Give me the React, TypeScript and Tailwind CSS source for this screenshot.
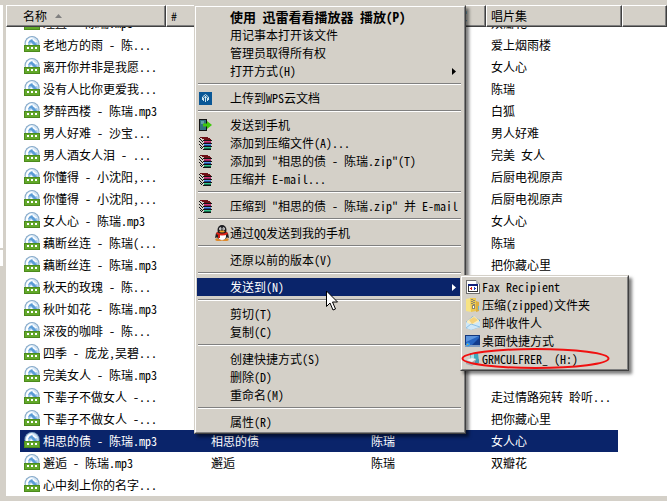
import type { ReactNode } from "react";

type Song = {
  name: string;
  title?: string;
  artist?: string;
  album?: string;
  selected?: boolean;
  cut?: boolean;
};

const songs: Song[] = [
  { name: "理直 - 陈瑞.mp3", album: "双瓣花", cut: true },
  { name: "老地方的雨 - 陈...", album: "爱上烟雨楼" },
  { name: "离开你并非是我愿...", album: "女人心" },
  { name: "没有人比你更爱我...", album: "陈瑞" },
  { name: "梦醉西楼 - 陈瑞.mp3", album: "白狐" },
  { name: "男人好难 - 沙宝...", album: "男人好难" },
  { name: "男人酒女人泪 - ...", album: "完美 女人" },
  { name: "你懂得 - 小沈阳,...", album: "后厨电视原声" },
  { name: "你懂得 - 小沈阳,...", album: "后厨电视原声" },
  { name: "女人心 - 陈瑞.mp3", album: "女人心" },
  { name: "藕断丝连 - 陈瑞(...", album: "陈瑞" },
  { name: "藕断丝连 - 陈瑞.mp3", album: "把你藏心里" },
  { name: "秋天的玫瑰 - 陈..." },
  { name: "秋叶如花 - 陈瑞.mp3" },
  { name: "深夜的咖啡 - 陈..." },
  { name: "四季 - 庞龙,吴碧..." },
  { name: "完美女人 - 陈瑞.mp3" },
  { name: "下辈子不做女人 -...", album: "走过情路宛转 聆听..." },
  { name: "下辈子不做女人 -...", album: "把你藏心里" },
  {
    name: "相思的债 - 陈瑞.mp3",
    title: "相思的债",
    artist: "陈瑞",
    album: "女人心",
    selected: true,
  },
  { name: "邂逅 - 陈瑞.mp3", title: "邂逅", artist: "陈瑞", album: "双瓣花" },
  { name: "心中刻上你的名字..." },
];

const MediaIcon = () => (
  <svg className="mb-0.5 h-4 w-4 shrink-0" viewBox="0 0 16 16">
    <circle cx="8" cy="7.500" r="7.500" fill="#86a9c8" />
    <circle cx="8" cy="7.500" r="6.500" fill="#cfe3f3" />
    <path d="M2 8q0-5 5-6.500l3 .5q-5 1-6 7H2z" fill="#fff" />
    <path d="M4 9q0-5 4-6l3 1q3 2 3 5z" fill="#9cc6ea" />
    <path d="M4 7q1-3 4-3.500l5 5.500h-3L7 6z" fill="#5b9bd5" />
    <path d="M6 9l1-2 2 2z" fill="#fff" />
    <path d="M9 2.500l4 3-1 1-3.500-2.500z" fill="#fff" />
    <rect y="9" width="16" height="7" fill="#4b8a1c" />
    <rect x="1" y="10" width="14" height="5" fill="#62a82a" />
    <path d="M3 11h2v2H3zM7 11h2v2H7zM11 11h2v2h-2z" fill="#fff" />
  </svg>
);

const CloudIcon = () => (
  <svg className="h-[13px] w-[13px]" viewBox="0 0 13 13">
    <rect width="13" height="13" fill="#0a5796" />
    <path
      d="M3.500 8V5L6.500 2.500l3 2.500v3M6.500 4v6M4.500 9V6l2-1.500 2 1.500v3"
      fill="none"
      stroke="#cfe6ee"
    />
  </svg>
);

const PhoneIcon = () => (
  <svg className="h-[13px] w-[13px]" viewBox="0 0 13 13">
    <rect x="0.5" y="0.5" width="7" height="11" fill="#2f7380" stroke="#111" />
    <path d="M2 2h3v3H2z" fill="#5fa0a8" />
    <path d="M4 4.500h4V2l5 4-5 4V7.500H4z" fill="#3fc80c" />
  </svg>
);

const RarIcon = () => (
  <svg
    className="h-[13px] w-[13px]"
    viewBox="0 0 13 13"
    shapeRendering="crispEdges"
  >
    <path d="M0 0h9v1h2v1h2v11H5v-1H4v-1H3v-1H2V9H1V8H0z" fill="#d4d0c8" />
    <path d="M1 0h8v1h2v1h1v1H5V2H3V1H1z" fill="#6e0f16" />
    <path d="M4 3h9v1H4zM4 6h9v1H4zM4 9h9v1H4zM4 12h8v1H4z" fill="#141414" />
    <path d="M5 4h7v1H5z" fill="#d63a72" />
    <path d="M5 5h7v1H5z" fill="#8c1c60" />
    <path d="M5 7h7v1H5z" fill="#4f9ae8" />
    <path d="M5 8h7v1H5z" fill="#20408c" />
    <path d="M5 10h7v1H5z" fill="#38c48c" />
    <path d="M5 11h7v1H5z" fill="#14684a" />
    <path
      d="M0 1h1v1H0zM1 2h1v1H1zM2 3h1v1H2zM3 4h1v1H3zM0 4h1v1H0zM1 5h1v1H1zM2 6h1v1H2zM3 7h1v1H3zM0 7h1v1H0zM1 8h1v1H1zM2 9h1v1H2zM3 10h1v1H3zM1 10h1v1H1zM2 11h1v1H2z"
      fill="#141414"
    />
  </svg>
);

const PenguinIcon = () => (
  <svg className="h-4 w-4" viewBox="0 0 16 16">
    <ellipse cx="4.800" cy="14.500" rx="3.500" ry="1.500" fill="#e08a2c" />
    <ellipse cx="11.200" cy="14.500" rx="3.500" ry="1.500" fill="#e08a2c" />
    <path d="M2 8l2-1v5l-3 1zM14 8l-2-1v5l3 1z" fill="#222" />
    <ellipse cx="8" cy="10" rx="5.500" ry="5" fill="#222" />
    <ellipse cx="8" cy="11" rx="4" ry="4" fill="#fff" />
    <ellipse cx="8" cy="5" rx="4.500" ry="5" fill="#1c1c20" />
    <ellipse cx="6.400" cy="3.800" rx="1.200" ry="1.600" fill="#fff" />
    <ellipse cx="9.600" cy="3.800" rx="1.200" ry="1.600" fill="#fff" />
    <path d="M6.500 3.500h1v1h-1zM8.700 3.500h1v1h-1z" fill="#000" />
    <ellipse cx="8" cy="6.500" rx="2.800" ry="1" fill="#f0a020" />
    <path d="M3 7q5 3 10 0l1 2q-6 3-12 0z" fill="#e02418" />
    <path d="M4 9h2v4H4z" fill="#d01c14" />
  </svg>
);

const FaxIcon = () => (
  <svg
    className="h-[14px] w-[14px]"
    viewBox="0 0 14 14"
    shapeRendering="crispEdges"
  >
    <path d="M0 0h10l4 3v11H0z" fill="#707070" />
    <path d="M1 1h9v3h3v9H1z" fill="#fff" />
    <path d="M10 0l4 4h-4z" fill="#b8b8b8" />
    <path d="M2 4h10v8H2z" fill="#333" />
    <path d="M2 4h10v2H2z" fill="#10207c" />
    <path d="M3 6h8v5H3z" fill="#fff" />
    <path d="M4 8h1V7h1v3H5V9H4z" fill="#d02020" />
    <path d="M8 7h1v1h1v1H9v1H8z" fill="#2040c0" />
  </svg>
);

const ZipIcon = () => (
  <svg className="h-4 w-4" viewBox="0 0 16 16">
    <path d="M1 2l5-1v14l-5-1z" fill="#f7e384" />
    <path d="M5 1h6v13l-5 1z" fill="#ecc850" />
    <path d="M11 4l3 1v9l-3 1z" fill="#dcae40" />
    <path d="M13 9h1v4h-1z" fill="#6fb4c8" />
    <path
      d="M6 2h2v1H6zM8 3h2v1H8zM6 4h2v1H6zM8 5h2v1H8zM6 6h2v1H6zM8 7h2v1H8zM7 8h3v4H7z"
      fill="#8a8670"
    />
    <path d="M8 9h1v2H8z" fill="#fff" />
  </svg>
);

const MailIcon = () => (
  <svg className="h-4 w-4" viewBox="0 0 16 16">
    <path d="M1 7l7-6 7 4v7l-9 3-5-2z" fill="#5fa8dc" />
    <path d="M2 6l7-5 5 4v4l-7 3-5-3z" fill="#fbeec0" />
    <path d="M4 5l5-3 4 3-6 4z" fill="#f4d27c" />
    <path d="M1 7l6 3 8-4v6l-9 3-5-2z" fill="#cfe8f8" />
    <path d="M1 13l5-4 9 3" fill="none" stroke="#8cc0e4" />
  </svg>
);

const DesktopIcon = () => (
  <svg className="h-4 w-4" viewBox="0 0 16 16">
    <rect y="2" width="15" height="11" fill="#14387c" />
    <rect x="1" y="3" width="13" height="9" fill="#2664c0" />
    <path d="M1 3h13L1 9z" fill="#5c94dc" />
    <path d="M7 12l7-7v7z" fill="#123c8c" />
    <rect y="12" width="15" height="2" fill="#7f9cc0" />
    <circle cx="3" cy="11.500" r="2" fill="#3ca0e8" />
    <path d="M2 11h1v1H2z" fill="#f0a020" />
  </svg>
);

const DriveIcon = () => (
  <svg className="h-4 w-4" viewBox="0 0 16 16">
    <path d="M5 2h8l1 9H6z" fill="#3fa8bc" />
    <path d="M6 3h3v6H6z" fill="#a4e0e8" />
    <path d="M1 9l6-2 4 1v4l-4 3-6-2z" fill="#a8acb0" />
    <path d="M1 9l6-2 4 1-4 3z" fill="#eef1f2" />
    <path d="M10 10l4-2v4l-4 2z" fill="#4c98b0" />
  </svg>
);

const HeadCell = ({ children }: { children?: ReactNode }) => (
  <th scope="col" className="p-0 font-normal">
    <div className="h-[22px] border-t border-l border-r border-b border-t-white border-l-white border-r-[#404040] border-b-[#404040]">
      <div className="flex h-full items-center gap-2 overflow-hidden border-r border-b border-[#808080] pl-1 whitespace-nowrap">
        {children}
      </div>
    </div>
  </th>
);

const SongRow = ({ song }: { song: Song }) => {
  const bg = song.selected ? "bg-[#0a246a] text-white" : "";
  const box = `flex h-[22px] shrink-0 items-center whitespace-nowrap ${bg}`;
  // the first row is scrolled halfway under the header
  const clip = song.cut
    ? "flex h-[7px] flex-col justify-end overflow-hidden"
    : "";
  return (
    <tr>
      <td className="p-0">
        <div className={`pl-3.5 ${clip}`}>
          <div className={`gap-[3px] pl-1 ${box}`}>
            <MediaIcon />
            {song.name}
          </div>
        </div>
      </td>
      <td className="p-0">
        <div className={clip}>
          <div className={box} />
        </div>
      </td>
      <td className="p-0">
        <div className={clip}>
          <div className={`pl-[5px] ${box}`}>{song.title}</div>
        </div>
      </td>
      <td className="p-0">
        <div className={clip}>
          <div className={`pl-[5px] ${box}`}>{song.artist}</div>
        </div>
      </td>
      <td className="p-0">
        <div className={`pr-1 ${clip}`}>
          <div className={`pl-[5px] ${box}`}>{song.album}</div>
        </div>
      </td>
      <td className="p-0" />
    </tr>
  );
};

const panel =
  "border border-t-[#d4d0c8] border-l-[#d4d0c8] border-r-[#404040] border-b-[#404040] bg-[#d4d0c8] shadow-[3px_3px_3px_rgba(0,0,0,0.5)]";
const panelInner =
  "border border-t-white border-l-white border-r-[#808080] border-b-[#808080] py-px pl-px";

type MenuItemProps = {
  label: string;
  icon?: ReactNode;
  bold?: boolean;
  arrow?: boolean;
  active?: boolean;
  wideIcon?: boolean;
  children?: ReactNode;
};

const MenuItem = ({
  label,
  icon,
  bold,
  arrow,
  active,
  wideIcon,
  children,
}: MenuItemProps) => (
  <li role="none" className="relative">
    <button
      type="button"
      role="menuitem"
      className={`flex h-[18px] w-full items-center pr-1.5 text-left whitespace-nowrap ${
        active ? "bg-[#0a246a] text-white" : ""
      } ${bold ? "text-[13px] font-bold" : ""}`}
    >
      <span
        className={`flex w-[33px] shrink-0 ${wideIcon ? "justify-end" : "pl-0.5"}`}
      >
        {icon}
      </span>
      <span className="flex-1">{label}</span>
      {arrow && (
        <svg className="h-[7px] w-1" viewBox="0 0 4 7" fill="currentColor">
          <path d="M0 0l4 3.500L0 7z" />
        </svg>
      )}
    </button>
    {children}
  </li>
);

const Separator = () => (
  <li
    role="separator"
    className="mx-px mt-[3px] mb-1 h-0.5 border-t border-b border-t-[#808080] border-b-white"
  />
);

const SendToItem = ({ icon, label }: { icon: ReactNode; label: string }) => (
  <li role="none">
    <button
      type="button"
      role="menuitem"
      className="flex h-[18px] w-full items-center text-left whitespace-nowrap"
    >
      <span className="flex w-[19px] shrink-0 justify-center">{icon}</span>
      {label}
    </button>
  </li>
);

const SendToMenu = () => (
  <div className={`absolute -top-[3px] left-full -ml-0.5 w-[169px] ${panel}`}>
    <ul role="menu" className={panelInner}>
      <SendToItem icon={<FaxIcon />} label="Fax Recipient" />
      <SendToItem icon={<ZipIcon />} label="压缩(zipped)文件夹" />
      <SendToItem icon={<MailIcon />} label="邮件收件人" />
      <SendToItem icon={<DesktopIcon />} label="桌面快捷方式" />
      <SendToItem icon={<DriveIcon />} label="GRMCULFRER_ (H:)" />
    </ul>
    <svg
      className="pointer-events-none absolute bottom-0 left-0 h-[22px] w-[150px]"
      viewBox="0 0 150 22"
    >
      <ellipse
        cx="74.500"
        cy="10.500"
        rx="73"
        ry="9.500"
        fill="none"
        stroke="#f01010"
        strokeWidth="2"
      />
    </svg>
  </div>
);

const ContextMenu = () => (
  <div className={`absolute top-[5px] left-[194px] w-[272px] ${panel}`}>
    <ul role="menu" className={`${panelInner} pr-0.5`}>
      <MenuItem label="使用 迅雷看看播放器 播放(P)" bold />
      <MenuItem label="用记事本打开该文件" />
      <MenuItem label="管理员取得所有权" />
      <MenuItem label="打开方式(H)" arrow />
      <Separator />
      <MenuItem label="上传到WPS云文档" icon={<CloudIcon />} />
      <Separator />
      <MenuItem label="发送到手机" icon={<PhoneIcon />} />
      <MenuItem label="添加到压缩文件(A)..." icon={<RarIcon />} />
      <MenuItem
        label={'添加到 "相思的债 - 陈瑞.zip"(T)'}
        icon={<RarIcon />}
      />
      <MenuItem label="压缩并 E-mail..." icon={<RarIcon />} />
      <Separator />
      <MenuItem
        label={'压缩到 "相思的债 - 陈瑞.zip" 并 E-mail'}
        icon={<RarIcon />}
      />
      <Separator />
      <MenuItem label="通过QQ发送到我的手机" icon={<PenguinIcon />} wideIcon />
      <Separator />
      <MenuItem label="还原以前的版本(V)" />
      <Separator />
      <MenuItem label="发送到(N)" arrow active>
        <SendToMenu />
        {/* mouse pointer */}
        <svg
          className="pointer-events-none absolute top-3 left-[129px] h-[21px] w-3"
          viewBox="0 0 12 21"
        >
          <path
            d="M0.500 1v15.500l3.500-3.500 3 7 2.500-1-3-7h5z"
            fill="#fff"
            stroke="#000"
          />
        </svg>
      </MenuItem>
      <Separator />
      <MenuItem label="剪切(T)" />
      <MenuItem label="复制(C)" />
      <Separator />
      <MenuItem label="创建快捷方式(S)" />
      <MenuItem label="删除(D)" />
      <MenuItem label="重命名(M)" />
      <Separator />
      <MenuItem label="属性(R)" />
    </ul>
  </div>
);

const App = () => {
  return (
    <div className="relative overflow-hidden bg-white font-['Noto_Sans_CJK_SC','Liberation_Sans',sans-serif] text-xs text-black [font-feature-settings:'hwid']">
      <div className="flex gap-[3px] bg-[#d4d0c8] py-[5px]">
        {/* edge of the folder pane */}
        <div className="flex w-[3px] flex-col gap-0.5">
          <div className="h-[243px] bg-white" />
          <div className="h-4 bg-white" />
        </div>
        <main className="min-w-0 flex-1 bg-white">
          <table className="w-full table-fixed border-collapse text-left">
            <colgroup>
              <col className="w-40" />
              <col className="w-10" />
              <col className="w-40" />
              <col className="w-[120px]" />
              <col className="w-[136px]" />
              <col />
            </colgroup>
            <thead className="bg-[#d4d0c8]">
              <tr>
                <HeadCell>
                  <span className="pl-3">名称</span>
                  <svg className="h-1 w-[7px]" viewBox="0 0 7 4">
                    <path d="M0 4l3.500-4L7 4z" fill="#808080" />
                  </svg>
                </HeadCell>
                <HeadCell>#</HeadCell>
                <HeadCell>标题</HeadCell>
                <HeadCell>参与创作的艺术家</HeadCell>
                <HeadCell>唱片集</HeadCell>
                <HeadCell />
              </tr>
            </thead>
            <tbody>
              {songs.map((song, i) => (
                <SongRow key={i} song={song} />
              ))}
            </tbody>
          </table>
        </main>
      </div>
      <ContextMenu />
    </div>
  );
};

export default App;
